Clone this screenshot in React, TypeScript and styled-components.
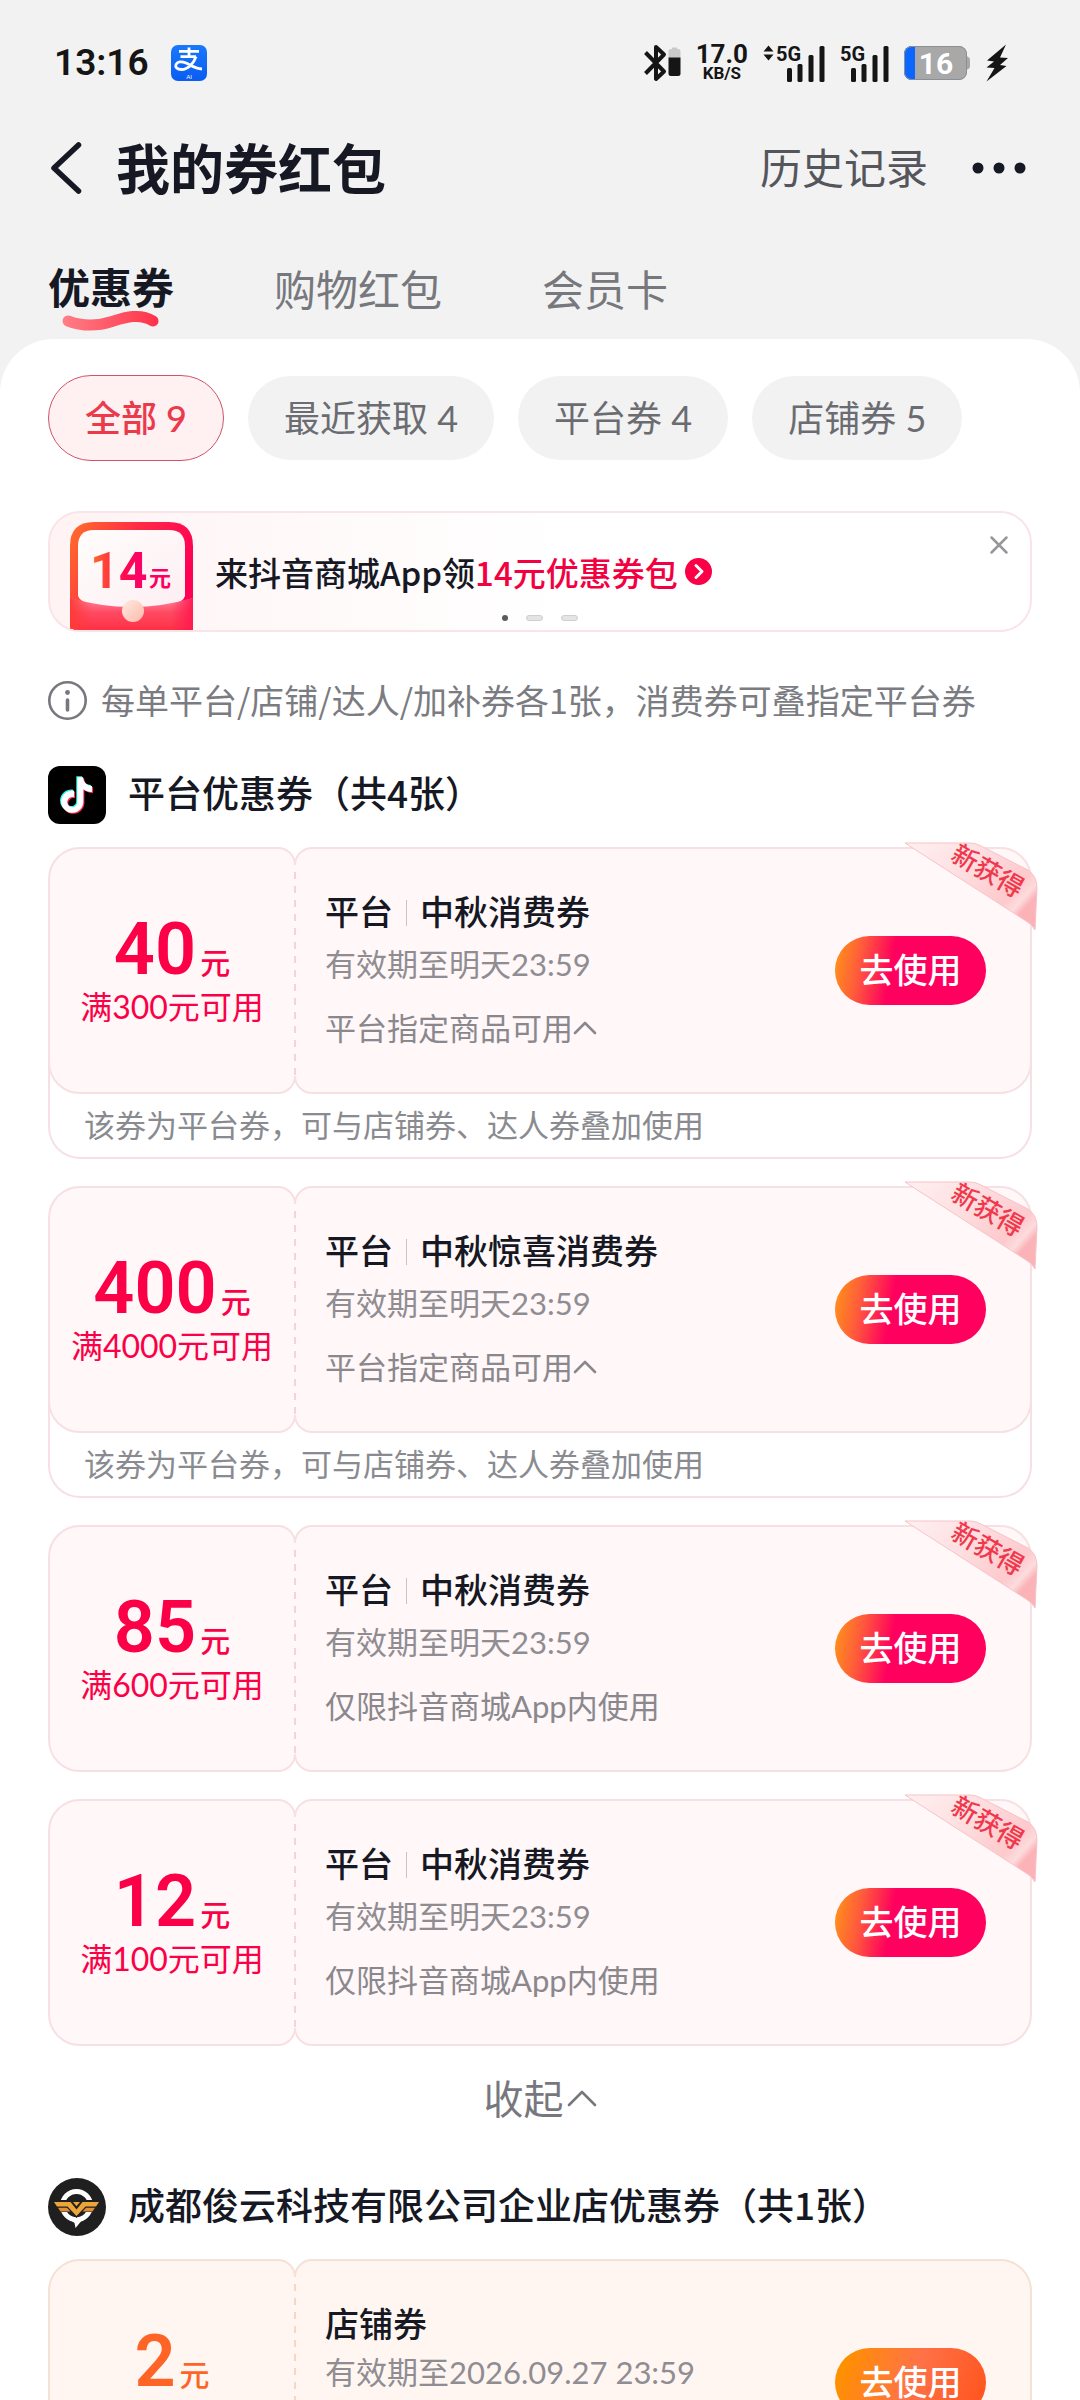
import React from "react";
import styled, { createGlobalStyle, css } from "styled-components";

const sans = '"Lato", "Noto Sans CJK SC", sans-serif';
const cjk = '"Noto Sans CJK SC", sans-serif';
const numeric = '"Roboto", "Noto Sans CJK SC", sans-serif';

type Tone = "platform" | "shop";

const tones = {
  platform: {
    bg: "#fff7f8",
    line: "#f7e0e4",
    dash: "#f9d2d8",
    amount: "#fb0046",
    button: "linear-gradient(100deg, #ff8a1e 4%, #ff5a3c 18%, #ff005e 38%)",
  },
  shop: {
    bg: "#fff6f2",
    line: "#f6e1d7",
    dash: "#fbd5c2",
    amount: "#ff6427",
    button: "linear-gradient(110deg, #ff9000 8%, #ff7248 50%, #ff5722 92%)",
  },
};

const GlobalStyle = createGlobalStyle`
  *, *::before, *::after { box-sizing: border-box; }
  body { margin: 0; background: #f2f2f2; }
  button { margin: 0; padding: 0; border: 0; background: none; font: inherit; color: inherit; cursor: pointer; }
  a { color: inherit; text-decoration: none; }
  h1, h2, h3, p { margin: 0; font-weight: inherit; font-size: inherit; }
  svg { display: block; flex: none; overflow: visible; }
`;

const Screen = styled.div`
  height: 100vh;
  overflow-y: auto;
  scrollbar-width: none;
  background: #f2f2f2;
  color: #161823;
  font-family: ${sans};
`;

/* ---------- status bar ---------- */

const StatusBar = styled.div`
  display: flex;
  align-items: center;
  justify-content: space-between;
  height: 126px;
  padding: 0 72px 0 54px;
  color: #151515;
`;

const StatusGroup = styled.div<{ $gap: number }>`
  display: flex;
  align-items: center;
  gap: ${(p) => p.$gap}px;
`;

const Clock = styled.time`
  font: 600 37px/48px ${numeric};
`;

const NetSpeed = styled.div`
  display: flex;
  flex-direction: column;
  align-items: center;
  font-family: ${numeric};
  font-weight: 700;
`;

const SpeedValue = styled.span`
  font-size: 26px;
  line-height: 20px;
`;

const SpeedUnit = styled.span`
  font-size: 17px;
  line-height: 18px;
`;

/* ---------- header ---------- */

const Header = styled.header`
  display: flex;
  align-items: center;
  height: 84px;
  padding: 0 54px 0 48px;
`;

const IconButton = styled.button`
  display: flex;
  align-items: center;
`;

const Title = styled.h1`
  flex: 1;
  padding: 0 0 2px 30px;
  font: 700 54px/72px ${cjk};
`;

const HistoryLink = styled.a`
  margin-right: 44px;
  color: #55565c;
  font-size: 42px;
  line-height: 60px;
`;

const Tabs = styled.nav`
  display: flex;
  align-items: flex-start;
  gap: 100px;
  padding: 50px 48px 19px;
`;

const Tab = styled.button<{ $active?: boolean }>`
  position: relative;
  color: ${(p) => (p.$active ? "#161823" : "#77787d")};
  font-weight: ${(p) => (p.$active ? 700 : 400)};
  font-size: 42px;
  line-height: ${(p) => (p.$active ? 56 : 60)}px;
`;

const Squiggle = styled.svg`
  position: absolute;
  left: 14px;
  top: 49px;
`;

/* ---------- content panel ---------- */

const Panel = styled.main`
  padding: 36px 48px 40px;
  border-radius: 54px 54px 0 0;
  background: #fff;
`;

const Chips = styled.div`
  display: flex;
  align-items: center;
  gap: 24px;
`;

const Chip = styled.button<{ $active?: boolean }>`
  height: 84px;
  padding: 0 36px;
  border-radius: 43px;
  background: #f2f2f2;
  color: #6b6c72;
  font-size: 36px;
  line-height: 52px;
  white-space: nowrap;
  ${(p) =>
    p.$active &&
    css`
      height: 86px;
      border: 1px solid #cf5468;
      background: #fff0f1;
      color: #ea3a4c;
      font-weight: 500;
    `}
`;

const Banner = styled.section`
  position: relative;
  height: 121px;
  margin-top: 50px;
  border: 2px solid #fae4e8;
  border-radius: 32px;
  background: linear-gradient(90deg, #fff3f4, #fff 52%);
  overflow: hidden;
`;

const BannerLink = styled.a`
  display: flex;
  align-items: center;
  height: 100%;
  padding-left: 20px;
  font: 500 33px/48px ${cjk};
`;

const Envelope = styled.svg`
  align-self: flex-end;
  margin-right: 22px;
`;

const Highlight = styled.span`
  margin-right: 7px;
  color: #f2003f;
`;

const CloseButton = styled(IconButton)`
  position: absolute;
  top: 22px;
  right: 21px;
`;

const Dots = styled.div`
  position: absolute;
  left: 0;
  right: 0;
  bottom: 9px;
  display: flex;
  justify-content: center;
  gap: 18px;
`;

const Dot = styled.i<{ $active?: boolean }>`
  width: ${(p) => (p.$active ? 6 : 17)}px;
  height: 6px;
  border: ${(p) => (p.$active ? "0" : "1px solid #cfcfcf")};
  border-radius: 3px;
  background: ${(p) => (p.$active ? "#5b5b5b" : "#e4e4e4")};
`;

const Notice = styled.p`
  display: flex;
  align-items: center;
  gap: 13px;
  height: 40px;
  margin-top: 48px;
  color: #7b7c81;
  font: 400 34px/40px ${cjk};
  white-space: nowrap;
`;

/* ---------- coupon groups ---------- */

const Group = styled.section<{ $gap: number }>`
  margin-top: ${(p) => p.$gap}px;
`;

const GroupHeader = styled.header`
  display: flex;
  align-items: center;
  gap: 22px;
  height: 58px;
  margin-bottom: 23px;
`;

const GroupTitle = styled.h2`
  padding-bottom: 6px;
  font: 500 37px/52px ${cjk};
  white-space: nowrap;
`;

const CouponList = styled.div`
  display: grid;
  gap: 27px;
`;

const Coupon = styled.article`
  position: relative;
`;

const CouponBody = styled.div`
  position: relative;
  z-index: 1;
  display: flex;
  min-height: 247px;
`;

const AmountPanel = styled.div<{ $tone: Tone }>`
  display: flex;
  flex-direction: column;
  align-items: center;
  width: 248px;
  padding-top: 65px;
  border: 2px solid ${(p) => tones[p.$tone].line};
  border-radius: 32px 18px 18px 32px;
  background: ${(p) => tones[p.$tone].bg};
  color: ${(p) => tones[p.$tone].amount};
`;

const Amount = styled.p`
  display: flex;
  align-items: baseline;
  gap: 4px;
  height: 72px;
  font: 600 72px/72px ${numeric};
`;

const AmountUnit = styled.span`
  font: 500 30px/40px ${cjk};
`;

const Condition = styled.p`
  font-size: 32px;
  line-height: 42px;
  white-space: nowrap;
`;

const DetailPanel = styled.div<{ $tone: Tone }>`
  position: relative;
  display: flex;
  flex: 1;
  align-items: center;
  justify-content: space-between;
  margin-left: -2px;
  padding: 0 44px 0 29px;
  border: 2px solid ${(p) => tones[p.$tone].line};
  border-radius: 18px 32px 32px 18px;
  background: ${(p) => tones[p.$tone].bg};

  &::before {
    content: "";
    position: absolute;
    left: -2px;
    top: 16px;
    bottom: 16px;
    width: 2px;
    background: repeating-linear-gradient(
      ${(p) => tones[p.$tone].bg} 0 7px,
      ${(p) => tones[p.$tone].dash} 7px 14px
    );
  }
`;

const Details = styled.div`
  align-self: flex-start;
  padding-top: 40px;
`;

const CouponTitle = styled.h3`
  display: flex;
  align-items: center;
  font: 500 34px/44px ${cjk};
  white-space: nowrap;
`;

const Separator = styled.i`
  width: 1px;
  height: 26px;
  margin: 4px 13px 0;
  background: #c9c4c8;
`;

const Validity = styled.p<{ $compact: boolean }>`
  margin-top: ${(p) => (p.$compact ? 6 : 10)}px;
  color: #8f8d92;
  font-size: 31px;
  line-height: 42px;
  white-space: nowrap;
`;

const Scope = styled.p`
  display: flex;
  align-items: center;
  margin-top: 22px;
  color: #8a888d;
  font-size: 31px;
  line-height: 42px;
  white-space: nowrap;
`;

const UseButton = styled.button<{ $tone: Tone }>`
  width: 151px;
  height: 69px;
  padding-bottom: 4px;
  border-radius: 35px;
  background: ${(p) => tones[p.$tone].button};
  color: #fff;
  font: 500 34px/50px ${cjk};
`;

const StackNote = styled.p`
  display: flex;
  align-items: center;
  height: 98px;
  margin-top: -33px;
  padding: 32px 34px 0;
  border: 2px solid #f7e0e4;
  border-top: 0;
  border-radius: 0 0 32px 32px;
  color: #8a8b90;
  font-size: 31px;
  line-height: 42px;
  white-space: nowrap;
`;

const Ribbon = styled.svg`
  position: absolute;
  z-index: 2;
  top: -5px;
  right: -6px;
`;

const CollapseButton = styled.button`
  display: flex;
  align-items: center;
  gap: 3px;
  margin: 26px auto 0;
  color: #77787d;
  font-size: 40px;
  line-height: 54px;
`;

/* ---------- drawings ---------- */

const AlipayIcon = () => (
  <svg width="36" height="36" viewBox="0 0 36 36" aria-hidden="true">
    <defs>
      <linearGradient id="alipay" x1="0" y1="0" x2="0" y2="1">
        <stop offset="0" stopColor="#1a78fb" />
        <stop offset="1" stopColor="#0a5cf2" />
      </linearGradient>
    </defs>
    <rect width="36" height="36" rx="7" fill="url(#alipay)" />
    <g fill="none" stroke="#fff" strokeWidth="2.8">
      <path d="M8 6.400h20M18 2.500v9M9.500 11.600h15.500" />
      <path d="M25 11.600C23 18 17 24.500 10.500 24.500 6 24.500 4 22 5 19.500c1.200-3 5.500-3.500 10-1.500 5 2.200 9 5.500 16 6" />
    </g>
    <text x="18" y="34" textAnchor="middle" fontFamily="Lato, sans-serif" fontSize="6" fill="#fff">AI</text>
  </svg>
);

const BluetoothIcon = () => (
  <svg width="37" height="38" viewBox="0 0 37 38" aria-hidden="true">
    <path d="M1.500 8.500L20 27.500 12 35V3l8 7.500L1.500 29.500" fill="none" stroke="#151515" strokeWidth="4" strokeLinejoin="round" />
    <path d="M24.500 14V7.500a2.500 2.500 0 0 1 2.500-2.500h1V3.500h5V5h1a2.500 2.500 0 0 1 2.500 2.500V14z" fill="#c9c9c9" />
    <path d="M24.500 13.500h12v16a2.500 2.500 0 0 1-2.500 2.500h-7a2.500 2.500 0 0 1-2.500-2.500z" fill="#151515" />
  </svg>
);

const SignalIcon = ({ arrows }: { arrows?: boolean }) => (
  <svg width={arrows ? 62 : 49} height="38" viewBox={arrows ? "0 0 62 38" : "13 0 49 38"} aria-hidden="true">
    {arrows && <path d="M.5 7.500L5.500 1.500l5 6zM.5 10.500h10l-5 6z" fill="#151515" />}
    <text x="13" y="17" fontFamily="Roboto, sans-serif" fontWeight="700" fontSize="20" fill="#151515">5G</text>
    <g fill="#151515">
      <rect x="24" y="24" width="5" height="14" rx="1.500" />
      <rect x="34.500" y="20" width="5" height="18" rx="1.500" />
      <rect x="45.500" y="11" width="5" height="27" rx="1.500" />
      <rect x="56.500" y="2" width="5" height="36" rx="1.500" />
    </g>
  </svg>
);

const BatteryIcon = () => (
  <svg width="67" height="36" viewBox="0 0 67 36" aria-hidden="true">
    <defs>
      <clipPath id="cell">
        <rect x="0" y="1" width="63" height="34" rx="8" />
      </clipPath>
    </defs>
    <path d="M62 11.500h1.500q2.500 1 2.500 3v7q0 2-2.500 3H62z" fill="#a8a8a8" />
    <g clipPath="url(#cell)">
      <rect y="1" width="63" height="34" fill="#a8a8a8" />
      <rect y="1" width="11" height="34" fill="#0a66ff" />
    </g>
    <rect x=".5" y="1.500" width="62" height="33" rx="7.500" fill="none" stroke="#8b8f96" />
    <text x="32" y="29" textAnchor="middle" fontFamily="Roboto, sans-serif" fontWeight="700" fontSize="30" fill="#fff">16</text>
  </svg>
);

const BoltIcon = () => (
  <svg width="22" height="38" viewBox="0 0 22 38" aria-hidden="true">
    <path d="M20 .5L1 16.500l7 1-7.500 6 8 .5L.5 37.500 20.500 22l-6.500-1 8-7-8-.5z" fill="#151515" />
  </svg>
);

const BackIcon = () => (
  <svg width="38" height="56" viewBox="0 0 38 56" aria-hidden="true">
    <path d="M30.500 5L6 28l24.500 23" fill="none" stroke="#161823" strokeWidth="5.500" strokeLinecap="round" strokeLinejoin="round" />
  </svg>
);

const MoreIcon = () => (
  <svg width="54" height="12" viewBox="0 0 54 12" aria-hidden="true" fill="#161823">
    <circle cx="6" cy="6" r="5.500" />
    <circle cx="27" cy="6" r="5.500" />
    <circle cx="48" cy="6" r="5.500" />
  </svg>
);

const CloseIcon = () => (
  <svg width="20" height="20" viewBox="0 0 20 20" aria-hidden="true">
    <path d="M2.500 2.500l15 15M17.500 2.500l-15 15" stroke="#97979b" strokeWidth="2.500" strokeLinecap="round" />
  </svg>
);

const ArrowBadge = () => (
  <svg width="27" height="27" viewBox="0 0 27 27" aria-hidden="true">
    <circle cx="13.500" cy="13.500" r="13.500" fill="#fb0046" />
    <path d="M11 7.500l6 6-6 6" fill="none" stroke="#fff" strokeWidth="3" strokeLinecap="round" strokeLinejoin="round" />
  </svg>
);

const InfoIcon = () => (
  <svg width="40" height="40" viewBox="0 0 40 40" aria-hidden="true">
    <circle cx="19.500" cy="20.500" r="18.200" fill="none" stroke="#77787d" strokeWidth="2.600" />
    <circle cx="19.500" cy="12.500" r="2.400" fill="#77787d" />
    <path d="M19.500 20v10" stroke="#77787d" strokeWidth="3.600" strokeLinecap="round" />
  </svg>
);

const ChevronUp = ({ width, stroke }: { width: number; stroke: number }) => (
  <svg width={width} height={width / 2 + 3} viewBox={`0 0 ${width} ${width / 2 + 3}`} aria-hidden="true">
    <path
      d={`M2 ${width / 2}L${width / 2} 2L${width - 2} ${width / 2}`}
      fill="none"
      stroke="currentColor"
      strokeWidth={stroke}
      strokeLinecap="round"
      strokeLinejoin="round"
    />
  </svg>
);

const EnvelopeArt = () => (
  <Envelope width="123" height="108" viewBox="0 2 123 108" aria-hidden="true">
    <defs>
      <linearGradient id="envBack" x1="0" y1="0" x2="1" y2="0.400">
        <stop offset="0" stopColor="#ff6f2a" />
        <stop offset="0.500" stopColor="#ff2a47" />
        <stop offset="1" stopColor="#ff0055" />
      </linearGradient>
      <linearGradient id="envPaper" x1="0" y1="0" x2="1" y2="1">
        <stop offset="0" stopColor="#fffdfb" />
        <stop offset="1" stopColor="#fdeef3" />
      </linearGradient>
      <linearGradient id="envFront" x1="0" y1="0" x2="0" y2="1">
        <stop offset="0" stopColor="#ff86a0" />
        <stop offset="0.450" stopColor="#ff4a62" />
        <stop offset="1" stopColor="#ff3145" />
      </linearGradient>
      <linearGradient id="envFrontSide" x1="0" y1="0" x2="1" y2="0">
        <stop offset="0" stopColor="#ff3a38" />
        <stop offset="0.180" stopColor="#ff3a38" stopOpacity="0" />
        <stop offset="0.820" stopColor="#ff1a50" stopOpacity="0" />
        <stop offset="1" stopColor="#ff1a50" />
      </linearGradient>
      <linearGradient id="envAmount" x1="22" y1="0" x2="76" y2="0" gradientUnits="userSpaceOnUse">
        <stop offset="0" stopColor="#ff6a2a" />
        <stop offset="0.600" stopColor="#ff0a4e" />
        <stop offset="1" stopColor="#fb0070" />
      </linearGradient>
      <linearGradient id="envSeal" x1="0" y1="0" x2="1" y2="1">
        <stop offset="0" stopColor="#ffeae0" />
        <stop offset="1" stopColor="#ffb9ac" />
      </linearGradient>
    </defs>
    <path d="M0 110V26Q0 2 24 2H99Q123 2 123 26V110z" fill="url(#envBack)" />
    <path d="M8 76V26Q8 10 24 10H99Q115 10 115 26V76Q112 88 62 90 12 88 8 76z" fill="url(#envPaper)" />
    <path d="M0 78Q62 96 123 78V110H0z" fill="url(#envFront)" />
    <path d="M0 78Q62 96 123 78V110H0z" fill="url(#envFrontSide)" />
    <circle cx="63" cy="91" r="11" fill="url(#envSeal)" />
    <text x="20" y="68" fontFamily="Roboto, sans-serif" fontWeight="700" fontSize="50" fill="url(#envAmount)">14</text>
    <text x="79" y="66" fontFamily="Noto Sans CJK SC, sans-serif" fontWeight="700" fontSize="22" fill="#fb0060">元</text>
  </Envelope>
);

const notePath =
  "M12.525.02c1.31-.02 2.61-.01 3.91-.02.08 1.53.63 3.09 1.75 4.17 1.12 1.11 2.7 1.62 4.24 1.79v4.03c-1.44-.05-2.89-.35-4.2-.97-.57-.26-1.1-.59-1.62-.93-.01 2.92.01 5.84-.02 8.75-.08 1.4-.54 2.79-1.35 3.94-1.31 1.92-3.58 3.17-5.91 3.21-1.43.08-2.86-.31-4.08-1.03-2.02-1.19-3.44-3.37-3.65-5.71-.02-.5-.03-1-.01-1.49.18-1.9 1.12-3.72 2.58-4.96 1.66-1.44 3.98-2.13 6.15-1.72.02 1.48-.04 2.96-.04 4.44-.99-.32-2.15-.23-3.02.37-.63.41-1.11 1.04-1.36 1.75-.21.51-.15 1.07-.14 1.61.24 1.64 1.82 3.02 3.5 2.87 1.12-.01 2.19-.66 2.77-1.61.19-.33.4-.67.41-1.06.1-1.79.06-3.57.07-5.36.01-4.03-.01-8.05.02-12.07z";

const DouyinLogo = () => (
  <svg width="58" height="58" viewBox="0 0 58 58" aria-hidden="true">
    <rect width="58" height="58" rx="12" fill="#000" />
    <g transform="translate(10.500 11) scale(1.480)">
      <path d={notePath} fill="#25f4ee" transform="translate(-0.500 -0.500)" />
      <path d={notePath} fill="#fe2c55" transform="translate(0.900 0.900)" />
      <path d={notePath} fill="#fff" transform="translate(0.200 0.200)" />
    </g>
  </svg>
);

const ShopLogo = () => (
  <svg width="58" height="58" viewBox="0 0 58 58" aria-hidden="true">
    <circle cx="29" cy="29" r="29" fill="#1f1f1f" />
    <path d="M21 41h14l-7.500 9-1-5z" fill="#fff" />
    <circle cx="28.500" cy="27.500" r="14" fill="none" stroke="#fff" strokeWidth="5" />
    <path d="M3 22h20.500l5 6 5-6H55l-7 12H35.500l-7 6-7-6H9z" fill="#1f1f1f" />
    <path d="M6 24h16.500l6 7.500 6-7.500H51l-3 4.500H37.500L28.500 38l-9-9.500H9z" fill="#eda53a" />
    <path d="M10 29.800h9l3.500 3.700h-10zM47 29.800h-9l-3.500 3.700h10z" fill="#e08f35" />
    <path d="M25 24h7l-3.500 4.200z" fill="#eda53a" />
  </svg>
);

const NewRibbon = () => (
  <Ribbon width="134" height="90" viewBox="0 0 134 90" role="img" aria-label="新获得">
    <defs>
      <linearGradient id="ribbon" x1="0" y1="0" x2="1" y2="0.600">
        <stop offset="0" stopColor="#fff0f1" />
        <stop offset="0.450" stopColor="#fedfe1" />
        <stop offset="0.850" stopColor="#fdc9cc" />
        <stop offset="0.940" stopColor="#fddcdd" />
        <stop offset="1" stopColor="#fbb3b8" />
      </linearGradient>
    </defs>
    <path d="M1 1H66Q72 1 77 4L124 28Q133 34 133 46L131 88Q128 82 122 79z" fill="url(#ribbon)" stroke="#f6c3c8" strokeWidth="1" />
    <text
      x="83"
      y="38"
      textAnchor="middle"
      transform="rotate(30 83 30)"
      fontFamily="Noto Sans CJK SC, sans-serif"
      fontWeight="500"
      fontSize="26"
      fill="#f0384c"
    >
      新获得
    </text>
  </Ribbon>
);

/* ---------- data ---------- */

interface CouponData {
  tone: Tone;
  amount: string;
  condition?: string;
  kind: string;
  name?: string;
  validity: string;
  scope?: string;
  expandable?: boolean;
  note?: string;
  isNew?: boolean;
}

const stackNote = "该券为平台券，可与店铺券、达人券叠加使用";

const platformCoupons: CouponData[] = [
  { tone: "platform", amount: "40", condition: "满300元可用", kind: "平台", name: "中秋消费券", validity: "有效期至明天23:59", scope: "平台指定商品可用", expandable: true, note: stackNote, isNew: true },
  { tone: "platform", amount: "400", condition: "满4000元可用", kind: "平台", name: "中秋惊喜消费券", validity: "有效期至明天23:59", scope: "平台指定商品可用", expandable: true, note: stackNote, isNew: true },
  { tone: "platform", amount: "85", condition: "满600元可用", kind: "平台", name: "中秋消费券", validity: "有效期至明天23:59", scope: "仅限抖音商城App内使用", isNew: true },
  { tone: "platform", amount: "12", condition: "满100元可用", kind: "平台", name: "中秋消费券", validity: "有效期至明天23:59", scope: "仅限抖音商城App内使用", isNew: true },
];

const shopCoupons: CouponData[] = [
  { tone: "shop", amount: "2", kind: "店铺券", validity: "有效期至2026.09.27 23:59" },
];

const tabs = ["优惠券", "购物红包", "会员卡"];
const filters = ["全部 9", "最近获取 4", "平台券 4", "店铺券 5"];

const CouponCard = ({ data }: { data: CouponData }) => (
  <Coupon>
    <CouponBody>
      <AmountPanel $tone={data.tone}>
        <Amount>
          {data.amount}
          <AmountUnit>元</AmountUnit>
        </Amount>
        {data.condition && <Condition>{data.condition}</Condition>}
      </AmountPanel>
      <DetailPanel $tone={data.tone}>
        <Details>
          <CouponTitle>
            {data.kind}
            {data.name && (
              <>
                <Separator />
                {data.name}
              </>
            )}
          </CouponTitle>
          <Validity $compact={data.tone === "shop"}>{data.validity}</Validity>
          {data.scope && (
            <Scope>
              {data.scope}
              {data.expandable && <ChevronUp width={24} stroke={2.6} />}
            </Scope>
          )}
        </Details>
        <UseButton $tone={data.tone}>去使用</UseButton>
      </DetailPanel>
    </CouponBody>
    {data.note && <StackNote>{data.note}</StackNote>}
    {data.isNew && <NewRibbon />}
  </Coupon>
);

export default function App() {
  return (
    <Screen>
      <GlobalStyle />
      <StatusBar>
        <StatusGroup $gap={22}>
          <Clock>13:16</Clock>
          <AlipayIcon />
        </StatusGroup>
        <StatusGroup $gap={15}>
          <BluetoothIcon />
          <NetSpeed>
            <SpeedValue>17.0</SpeedValue>
            <SpeedUnit>KB/S</SpeedUnit>
          </NetSpeed>
          <SignalIcon arrows />
          <SignalIcon />
          <BatteryIcon />
          <BoltIcon />
        </StatusGroup>
      </StatusBar>

      <Header>
        <IconButton aria-label="返回">
          <BackIcon />
        </IconButton>
        <Title>我的券红包</Title>
        <HistoryLink href="#history">历史记录</HistoryLink>
        <IconButton aria-label="更多">
          <MoreIcon />
        </IconButton>
      </Header>

      <Tabs>
        {tabs.map((label, i) => (
          <Tab key={label} $active={i === 0}>
            {label}
            {i === 0 && (
              <Squiggle width="98" height="24" viewBox="0 0 98 24" aria-hidden="true">
                <defs>
                  <linearGradient id="squiggle" x1="0" y1="0" x2="98" y2="0" gradientUnits="userSpaceOnUse">
                    <stop offset="0" stopColor="#ff7f86" />
                    <stop offset="1" stopColor="#ff3048" />
                  </linearGradient>
                </defs>
                <path d="M6 12C22 18 36 17 50 12.500S78 4 91 12" fill="none" stroke="url(#squiggle)" strokeWidth="11" strokeLinecap="round" />
              </Squiggle>
            )}
          </Tab>
        ))}
      </Tabs>

      <Panel>
        <Chips>
          {filters.map((label, i) => (
            <Chip key={label} $active={i === 0}>
              {label}
            </Chip>
          ))}
        </Chips>

        <Banner>
          <BannerLink href="#bonus">
            <EnvelopeArt />
            <span>来抖音商城App领</span>
            <Highlight>14元优惠券包</Highlight>
            <ArrowBadge />
          </BannerLink>
          <CloseButton aria-label="关闭">
            <CloseIcon />
          </CloseButton>
          <Dots>
            <Dot $active />
            <Dot />
            <Dot />
          </Dots>
        </Banner>

        <Notice>
          <InfoIcon />
          每单平台/店铺/达人/加补券各1张，消费券可叠指定平台券
        </Notice>

        <Group $gap={46}>
          <GroupHeader>
            <DouyinLogo />
            <GroupTitle>平台优惠券（共4张）</GroupTitle>
          </GroupHeader>
          <CouponList>
            {platformCoupons.map((c) => (
              <CouponCard key={c.amount} data={c} />
            ))}
          </CouponList>
          <CollapseButton>
            收起
            <ChevronUp width={30} stroke={2.6} />
          </CollapseButton>
        </Group>

        <Group $gap={52}>
          <GroupHeader>
            <ShopLogo />
            <GroupTitle>成都俊云科技有限公司企业店优惠券（共1张）</GroupTitle>
          </GroupHeader>
          <CouponList>
            {shopCoupons.map((c) => (
              <CouponCard key={c.amount} data={c} />
            ))}
          </CouponList>
        </Group>
      </Panel>
    </Screen>
  );
}
